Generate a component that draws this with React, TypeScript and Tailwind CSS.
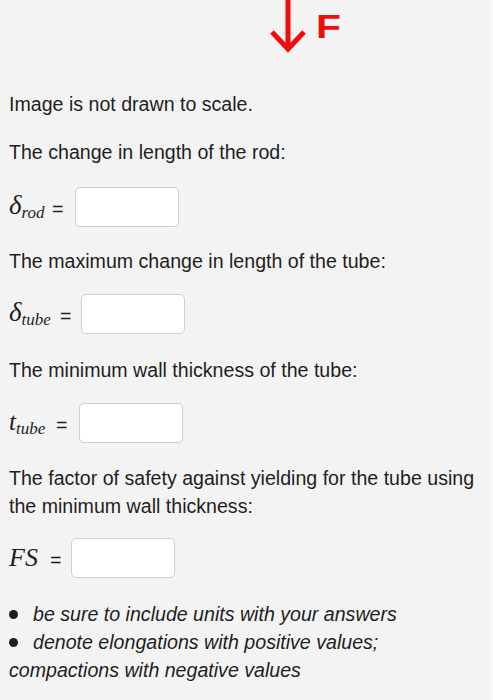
import React from "react";

const Box = ({ ml }: { ml: string }) => (
  <div className={`h-[40px] w-[104px] rounded-[5px] border border-[#cfcfcf] bg-white ${ml}`} />
);

export default function App() {
  return (
    <div className="min-h-[700px] w-[493px] border-r-[3px] border-[#f9f9f9] bg-[#f3f3f3] text-[19.6px] leading-[28px] text-[#1e1e1e] [font-family:'Liberation_Sans',Arial,sans-serif]">
      <div className="relative h-[90px]">
        <svg className="absolute left-[268px] top-0" width="40" height="56" viewBox="0 0 40 56">
          <line x1="20" y1="0" x2="20" y2="47" stroke="#f20d0d" strokeWidth="5" />
          <polyline points="4,32 20,49 36,32" fill="none" stroke="#f20d0d" strokeWidth="5" strokeLinejoin="miter" />
        </svg>
        <span className="absolute left-[316px] top-[6px] origin-left scale-x-[1.2] text-[34px] font-bold leading-[40px] text-[#f20d0d]">F</span>
      </div>

      <div className="pl-[9px]">Image is not drawn to scale.</div>
      <div className="mt-[20px] pl-[9px]">The change in length of the rod:</div>

      <div className="mt-[20px] flex h-[41px] items-center pl-[9px]">
        <span className="w-[43px] whitespace-nowrap [font-family:'Liberation_Serif',serif] italic">
          <span className="text-[27px]">δ</span>
          <span className="relative top-[4px] text-[17px]">rod</span>
        </span>
        <span className="relative top-[2px]">=</span>
        <Box ml="ml-[12px]" />
      </div>

      <div className="mt-[20px] pl-[9px]">The maximum change in length of the tube:</div>

      <div className="mt-[19px] flex h-[40px] items-center pl-[9px]">
        <span className="w-[51px] whitespace-nowrap [font-family:'Liberation_Serif',serif] italic">
          <span className="text-[27px]">δ</span>
          <span className="relative top-[4px] text-[17px]">tube</span>
        </span>
        <span className="relative top-[2px]">=</span>
        <Box ml="ml-[10px]" />
      </div>

      <div className="mt-[22px] pl-[9px]">The minimum wall thickness of the tube:</div>

      <div className="mt-[19px] flex h-[40px] items-center pl-[9px]">
        <span className="w-[47px] whitespace-nowrap [font-family:'Liberation_Serif',serif] italic">
          <span className="text-[25px]">t</span>
          <span className="relative top-[4px] text-[17px]">tube</span>
        </span>
        <span className="relative top-[2px]">=</span>
        <Box ml="ml-[12px]" />
      </div>

      <div className="mt-[21px] pl-[9px] pr-[8px]">
        The factor of safety against yielding for the tube using the minimum wall thickness:
      </div>

      <div className="mt-[18px] flex h-[40px] items-center pl-[9px]">
        <span className="w-[41px] whitespace-nowrap text-[26px] [font-family:'Liberation_Serif',serif] italic">FS</span>
        <span className="relative top-[2px]">=</span>
        <Box ml="ml-[10px]" />
      </div>

      <div className="mt-[22px] pl-[9px] italic">
        <div className="flex items-center">
          <span className="mr-[15px] inline-block h-[9px] w-[9px] rounded-full bg-[#1e1e1e]" />
          <span>be sure to include units with your answers</span>
        </div>
        <div className="flex items-center">
          <span className="mr-[15px] inline-block h-[9px] w-[9px] rounded-full bg-[#1e1e1e]" />
          <span>denote elongations with positive values;</span>
        </div>
        <div>compactions with negative values</div>
      </div>
    </div>
  );
}
